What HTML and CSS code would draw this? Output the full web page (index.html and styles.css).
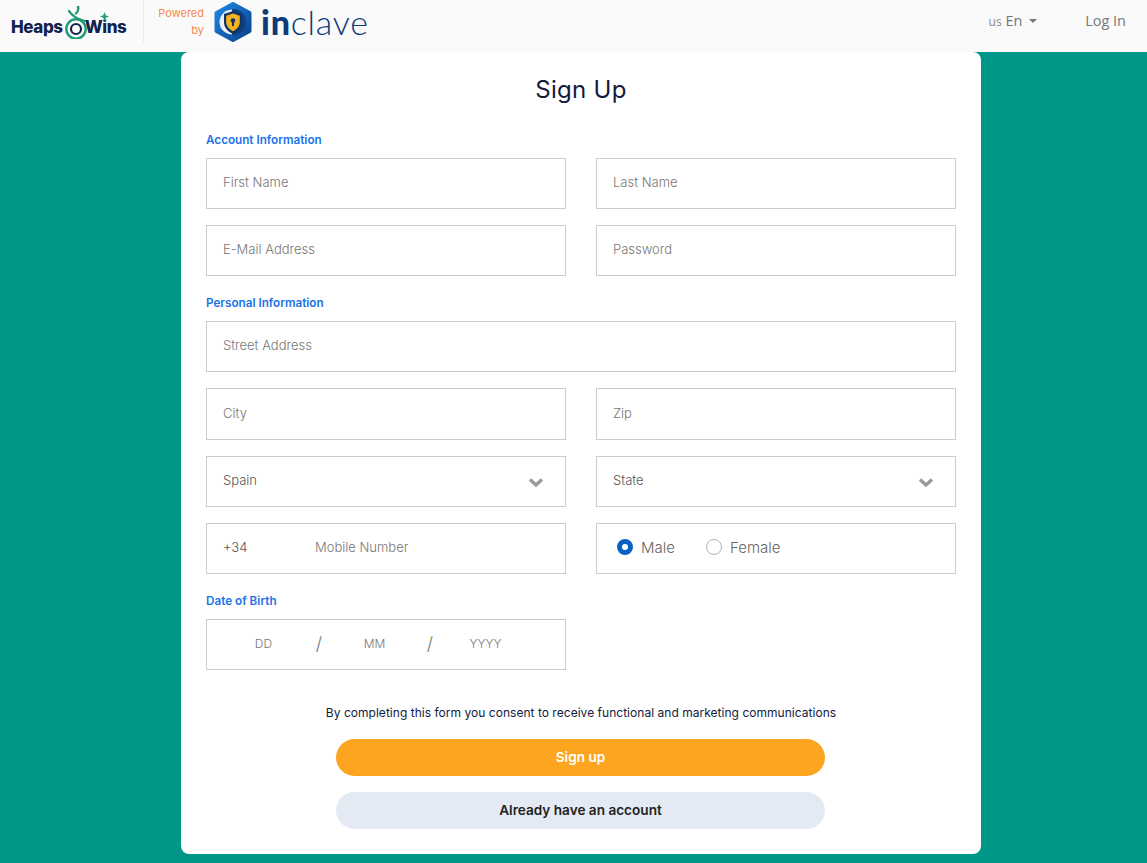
FILE: index.html
```html
<!DOCTYPE html>
<html lang="en">
  <head>
    <meta charset="UTF-8" />
    <meta name="viewport" content="width=device-width, initial-scale=1.0" />
    <title>Sign Up</title>
    <link rel="stylesheet" href="styles.css">
  </head>

  <body>
    <header class="topbar">
      <div class="brand">
        <a class="heaps-logo" href="#">
          <span>Heaps</span>
          <svg class="heaps-mark" width="26" height="33" viewBox="0 0 26 33" fill="none">
            <path d="M15 0.500c1 3 0 5-2 7" stroke="#1f9c74" stroke-width="2.400" stroke-linecap="round"/>
            <path d="M6 5c3 5 9 8 15 10" stroke="#1f9c74" stroke-width="2.400" stroke-linecap="round"/>
            <circle cx="13" cy="23" r="9.700" stroke="#1f9c74" stroke-width="2.400"/>
            <circle cx="13" cy="23" r="5" stroke="#11224f" stroke-width="2.200"/>
          </svg>
          <span>Wins</span>
          <svg class="heaps-star" width="9" height="9" viewBox="0 0 10 10">
            <path d="M5 0l1.300 3.700L10 5 6.300 6.300 5 10 3.700 6.300 0 5l3.700-1.300z" fill="#1f9c74"/>
          </svg>
        </a>
        <div class="powered">Powered<br>by</div>
        <svg class="shield-mark" width="38" height="40" viewBox="0 0 38 40">
          <defs>
            <linearGradient id="hex" x1="0" y1="0" x2="1" y2="1">
              <stop offset="0" stop-color="#1e88e5"/>
              <stop offset="1" stop-color="#0b3f8a"/>
            </linearGradient>
          </defs>
          <path d="M19 2L35.500 11V29L19 38 2.500 29V11z" fill="url(#hex)" stroke="url(#hex)" stroke-width="4" stroke-linejoin="round"/>
          <circle cx="19" cy="20" r="13" fill="#0f3f7f"/>
          <path d="M18 7.500a12.500 12.500 0 0 0 0 25z" fill="#e8f2fb"/>
          <path d="M19 9l9 3v8c0 6-4 9.500-9 12-5-2.500-9-6-9-12v-8z" fill="#0f3566"/>
          <path d="M19 11.500l6.800 2.200v6.300c0 4.500-3 7.200-6.800 9.200-3.800-2-6.800-4.700-6.800-9.200v-6.300z" fill="#f7b21d"/>
          <circle cx="19" cy="18.500" r="2.300" fill="#0f3566"/>
          <rect x="18" y="19" width="2" height="5" fill="#0f3566"/>
        </svg>
        <a class="inclave-logo" href="#"><b>in</b>clave</a>
      </div>
      <nav class="topnav">
        <a class="lang" href="#"><small>us</small> En <i class="caret"></i></a>
        <a class="login" href="#">Log In</a>
      </nav>
    </header>

    <main class="card">
      <h1>Sign Up</h1>
      <form>
        <h2>Account Information</h2>
        <div class="row">
          <input class="field" type="text" placeholder="First Name" />
          <input class="field" type="text" placeholder="Last Name" />
        </div>
        <div class="row">
          <input class="field" type="email" placeholder="E-Mail Address" />
          <input class="field" type="password" placeholder="Password" />
        </div>

        <h2 class="second">Personal Information</h2>
        <div class="row one">
          <input class="field" type="text" placeholder="Street Address" />
        </div>
        <div class="row tall">
          <input class="field" type="text" placeholder="City" />
          <input class="field" type="text" placeholder="Zip" />
        </div>
        <div class="row">
          <div class="field select">
            <span>Spain</span>
            <svg width="16" height="11" viewBox="0 0 16 11"><path d="M2 2.500l6 5.500 6-5.500" fill="none" stroke="#9a9a9a" stroke-width="3.400"/></svg>
          </div>
          <div class="field select">
            <span>State</span>
            <svg width="16" height="11" viewBox="0 0 16 11"><path d="M2 2.500l6 5.500 6-5.500" fill="none" stroke="#9a9a9a" stroke-width="3.400"/></svg>
          </div>
        </div>
        <div class="row">
          <div class="field phone">
            <span class="code">+34</span>
            <input type="tel" placeholder="Mobile Number" />
          </div>
          <div class="field gender">
            <label class="radio"><i class="dot on"></i>Male</label>
            <label class="radio"><i class="dot"></i>Female</label>
          </div>
        </div>

        <h2 class="third">Date of Birth</h2>
        <div class="row">
          <div class="field dob">
            <input type="text" placeholder="DD" />
            <span class="slash">/</span>
            <input type="text" placeholder="MM" />
            <span class="slash">/</span>
            <input type="text" placeholder="YYYY" />
          </div>
          <div></div>
        </div>

        <p class="consent">By completing this form you consent to receive functional and marketing communications</p>
        <button class="btn primary" type="button">Sign up</button>
        <button class="btn secondary" type="button">Already have an account</button>
      </form>
    </main>
  </body>
</html>
```

FILE: styles.css
```css
* {
  margin: 0;
  padding: 0;
  box-sizing: border-box;
  list-style: none;
}

body {
  background: #009688;
  font-family: "Inter", "Liberation Sans", sans-serif;
  color: #111b3d;
  height: 863px;
  overflow: hidden;
}

a {
  text-decoration: none;
  color: inherit;
}

.topbar {
  height: 52px;
  background: #fafafa;
  display: flex;
  justify-content: space-between;
  align-items: flex-start;
}

.brand {
  display: flex;
  align-items: center;
  height: 44px;
}

.heaps-logo {
  position: relative;
  width: 144px;
  height: 44px;
  padding: 10px 0 0 11px;
  display: flex;
  align-items: center;
  border-right: 1px solid #eeeeee;
  font-family: "Inter", sans-serif;
  font-weight: 800;
  font-size: 17px;
  letter-spacing: -0.4px;
  color: #11224f;
}

.heaps-mark {
  margin: -9px -4px 0 0;
}

.heaps-star {
  position: absolute;
  left: 100px;
  top: 12px;
}

.powered {
  width: 60px;
  text-align: right;
  font-size: 11px;
  line-height: 17px;
  color: #f58a4b;
}

.shield-mark {
  margin-left: 10px;
}

.inclave-logo {
  margin-left: 9px;
  margin-top: -1px;
  font-family: "Lato", sans-serif;
  font-size: 34px;
  font-weight: 300;
  letter-spacing: 0.8px;
  color: #0d3c78;
  line-height: 1;
}

.inclave-logo b {
  font-weight: 900;
}

.topnav {
  display: flex;
  align-items: center;
  gap: 48px;
  height: 40px;
  padding-right: 21px;
  font-family: "Open Sans", sans-serif;
  font-size: 14.5px;
  color: #777777;
}

.lang small {
  font-size: 12px;
  color: #8a8a8a;
}

.caret {
  display: inline-block;
  margin-left: 3px;
  vertical-align: 3px;
  border-top: 4px solid #777777;
  border-left: 4px solid transparent;
  border-right: 4px solid transparent;
}

.card {
  width: 800px;
  height: 802px;
  margin-left: 181px;
  padding: 0 25px;
  background: #ffffff;
  border-radius: 8px;
}

h1 {
  padding-top: 21px;
  height: 77px;
  text-align: center;
  font-size: 24px;
  line-height: 34px;
  font-weight: 400;
  letter-spacing: 0.3px;
  color: #111b3d;
}

h2 {
  height: 29px;
  padding-top: 4px;
  font-size: 11.700px;
  line-height: 15px;
  font-weight: 600;
  color: #1a73e8;
}

h2.second {
  height: 28px;
  margin-top: 17px;
  padding-top: 3px;
}

h2.third {
  margin-top: 17px;
  height: 28px;
  padding-top: 3px;
}

.row {
  display: grid;
  grid-template-columns: 360px 360px;
  column-gap: 30px;
  margin-bottom: 16px;
}

.row:has(+ h2) {
  margin-bottom: 0;
}

.row.one {
  grid-template-columns: 750px;
}

.row.tall .field {
  height: 52px;
}

.field {
  height: 51px;
  border: 1px solid #cccccc;
  background: #ffffff;
  padding: 0 16px 3px;
  font-family: "Inter", sans-serif;
  font-size: 13px;
  font-weight: 300;
  color: #555555;
  outline: none;
}

input::placeholder {
  color: #777777;
  opacity: 1;
}

.select {
  display: flex;
  align-items: center;
  justify-content: space-between;
  padding: 0 21px 0 16px;
}

.select span {
  margin-top: -3px;
}

.select svg {
  margin-top: 2px;
}

.phone {
  display: flex;
  align-items: center;
}

.phone input,
.dob input {
  border: 0;
  outline: none;
  font: inherit;
  background: transparent;
}

.phone .code {
  width: 92px;
}

.phone input {
  flex: 1;
}

.gender {
  display: flex;
  align-items: center;
  gap: 31px;
  padding: 0 0 3px 20px;
}

.radio {
  display: flex;
  align-items: center;
  gap: 8px;
  font-size: 15px;
  color: #666666;
}

.dot {
  width: 16px;
  height: 16px;
  border-radius: 50%;
  border: 1px solid #adb5bd;
  background: #ffffff;
}

.dot.on {
  border: 5px solid #0b62c4;
}

.dob {
  display: flex;
  align-items: center;
  padding: 0 0 3px 6px;
}

.dob input {
  width: 101px;
  text-align: center;
  font-size: 12px;
}

.slash {
  width: 10px;
  text-align: center;
  font-size: 18px;
  color: #777777;
}

.consent {
  margin-top: 35px;
  height: 34px;
  text-align: center;
  font-size: 12px;
  line-height: 16px;
  letter-spacing: 0.03px;
  color: #111b3d;
}

.btn {
  display: block;
  width: 489px;
  height: 37px;
  margin: 0 0 16px 130px;
  padding-bottom: 2px;
  border: 0;
  border-radius: 19px;
  font-family: "Inter", sans-serif;
  font-size: 13.600px;
  font-weight: 600;
}

.primary {
  background: #fda521;
  color: #ffffff;
}

.secondary {
  background: #e4eaf4;
  color: #222222;
}
```
